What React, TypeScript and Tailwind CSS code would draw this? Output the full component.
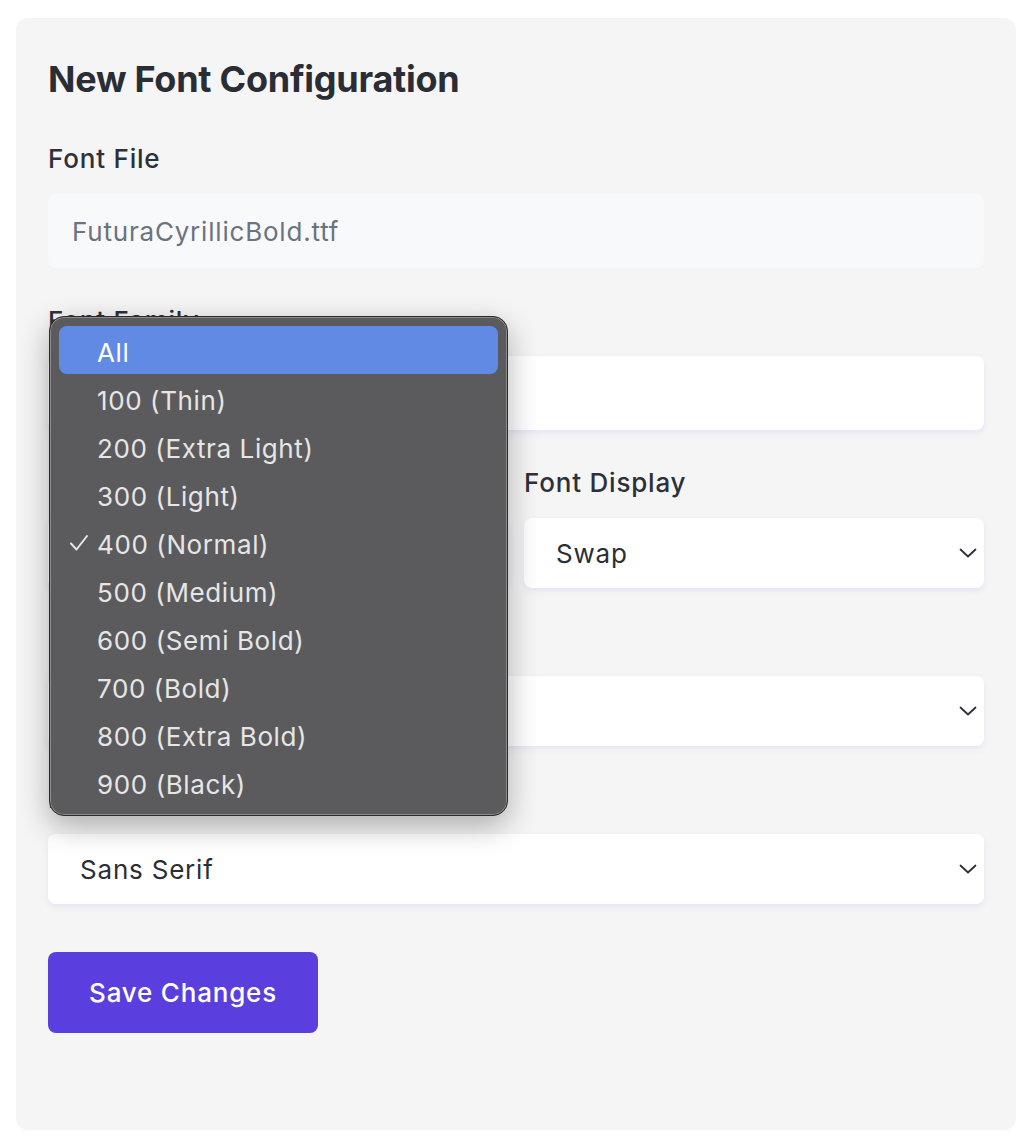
// react
import React from "react";

const weights = [
    "All",
    "100 (Thin)",
    "200 (Extra Light)",
    "300 (Light)",
    "400 (Normal)",
    "500 (Medium)",
    "600 (Semi Bold)",
    "700 (Bold)",
    "800 (Extra Bold)",
    "900 (Black)",
];

const Chevron: React.FC = () => (
    <svg width="18" height="10" viewBox="0 0 18 10" fill="none" className="shrink-0">
        <path d="M1.5 1.5L9 8.5L16.5 1.5" stroke="#2d3038" strokeWidth="1.8" strokeLinecap="round" strokeLinejoin="round" />
    </svg>
);

const Label: React.FC<{ children: React.ReactNode }> = ({ children }) => (
    <label className="block text-[26px] leading-[36px] tracking-[0.8px] font-medium text-[#2d3038] mb-[17px]">{children}</label>
);

const SelectBox: React.FC<{ value: string }> = ({ value }) => (
    <div className="flex items-center justify-between h-[70px] pl-8 pr-[7px] bg-white rounded-lg shadow-[0_3px_6px_rgba(99,102,241,0.10)] text-[26px] tracking-[0.8px] text-[#2b2e35]">
        <span>{value}</span>
        <Chevron />
    </div>
);

export default function App() {
    return (
        <div className="min-h-screen bg-white px-4 pt-[18px]" style={{ fontFamily: "Inter, 'Noto Sans', sans-serif" }}>
            <div className="relative w-[1000px] h-[1112px] bg-[#f5f5f5] rounded-xl px-8 pt-[34px]">
                {/* Titulo */}
                <h2 className="text-[36px] leading-[54px] tracking-[-0.25px] font-bold text-[#2a2d34] mb-[35px]">New Font Configuration</h2>

                {/* Archivo */}
                <div className="mb-[35px]">
                    <Label>Font File</Label>
                    <div className="flex items-center h-[74px] px-6 bg-[#f8f9fb] rounded-lg text-[26px] tracking-[0.8px] text-[#6b7280]">
                        FuturaCyrillicBold.ttf
                    </div>
                </div>

                {/* Familia */}
                <div className="mb-[35px]">
                    <Label>Font Family</Label>
                    <div className="flex items-center h-[74px] px-6 bg-white rounded-lg shadow-[0_3px_6px_rgba(99,102,241,0.10)] text-[26px] tracking-[0.8px] text-[#2b2e35]">
                        Futura Cyrillic
                    </div>
                </div>

                {/* Peso y display */}
                <div className="grid grid-cols-2 gap-4 mb-[35px]">
                    <div>
                        <Label>Font Weight</Label>
                        <SelectBox value="400 (Normal)" />
                    </div>
                    <div>
                        <Label>Font Display</Label>
                        <SelectBox value="Swap" />
                    </div>
                </div>

                {/* Estilo */}
                <div className="mb-[35px]">
                    <Label>Font Style</Label>
                    <SelectBox value="Normal" />
                </div>

                {/* Fallback */}
                <div className="mb-12">
                    <Label>Fallback Font</Label>
                    <SelectBox value="Sans Serif" />
                </div>

                <button className="h-[81px] w-[270px] rounded-lg bg-[#5b3fde] text-white text-[26px] tracking-[0.8px] font-medium">
                    Save Changes
                </button>

                {/* Menu desplegable */}
                <div className="absolute left-[33px] top-[298px] w-[459px] h-[500px] rounded-[15px] bg-[#5b5b5d] border border-[#2a2a2a] shadow-[0_10px_30px_rgba(0,0,0,0.30)] ring-1 ring-inset ring-[#8c8c8e] p-[9px]">
                    {weights.map((w, i) => (
                        <div
                            key={w}
                            className={`relative flex items-center h-[48px] pl-[38px] pt-[4px] rounded-lg text-[26px] tracking-[0.6px] ${
                                i === 0 ? "bg-[#618ae5] text-white" : "text-[#e6e6e6]"
                            }`}
                        >
                            {w === "400 (Normal)" && (
                                <svg width="20" height="18" viewBox="0 0 20 18" fill="none" className="absolute left-[10px] top-[16px]">
                                    <path d="M2 9.5L7.5 15.5L18 2" stroke="#e6e6e6" strokeWidth="2" strokeLinecap="round" strokeLinejoin="round" />
                                </svg>
                            )}
                            {w}
                        </div>
                    ))}
                </div>
            </div>
        </div>
    );
}
